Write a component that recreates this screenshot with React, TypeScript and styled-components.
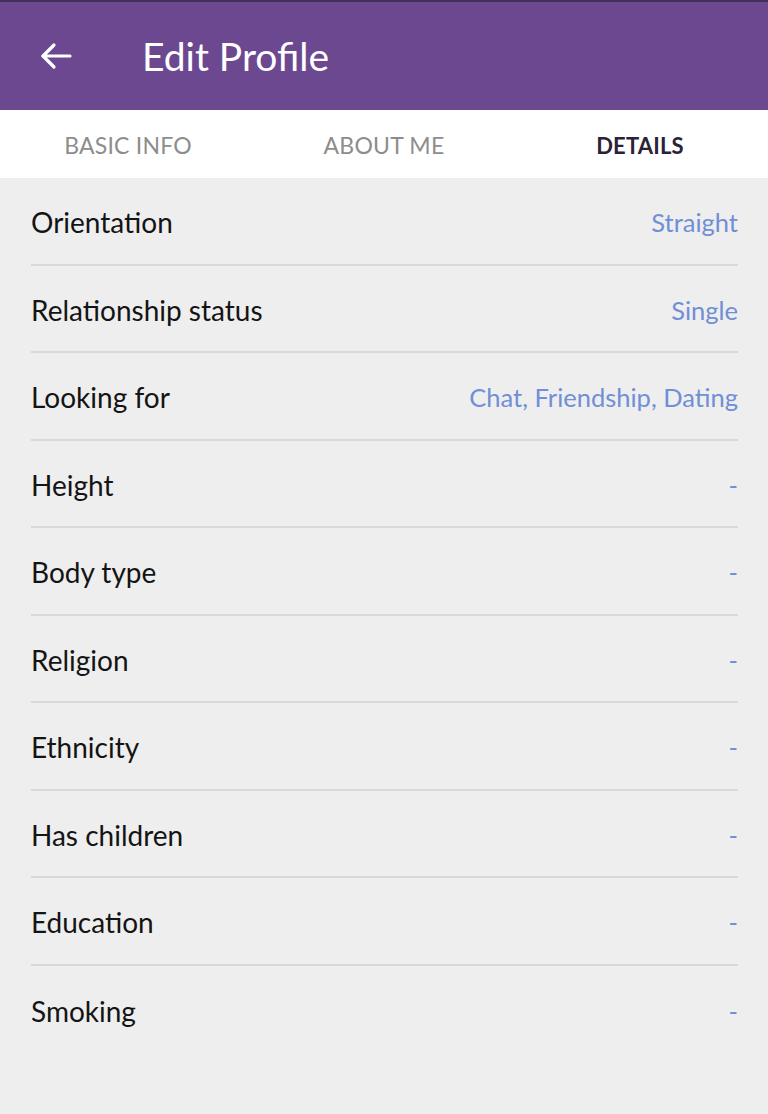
import styled, { createGlobalStyle } from "styled-components";

const GlobalStyle = createGlobalStyle`
  html, body {
    margin: 0;
    padding: 0;
    background: #eeeeee;
    font-family: Lato, "Noto Sans", "Liberation Sans", sans-serif;
  }
`;

const Page = styled.div`
  width: 768px;
  min-height: 1114px;
  background: #eeeeee;
  display: flex;
  flex-direction: column;
`;

const Header = styled.header`
  height: 110px;
  box-sizing: border-box;
  background: #6c4891;
  border-top: 2px solid #43305a;
  display: flex;
  align-items: center;
  padding-left: 38px;
`;

const BackButton = styled.button`
  border: none;
  background: none;
  padding: 0;
  width: 36px;
  height: 36px;
  display: flex;
  align-items: center;
  justify-content: center;
  color: #ffffff;
  cursor: pointer;
`;

const Title = styled.h1`
  margin: 0 0 0 68px;
  font-size: 39px;
  font-weight: 400;
  color: #ffffff;
`;

const Tabs = styled.nav`
  height: 68px;
  background: #ffffff;
  display: grid;
  grid-template-columns: repeat(3, 1fr);
`;

const Tab = styled.div<{ $active?: boolean }>`
  display: flex;
  align-items: center;
  justify-content: center;
  padding-top: 2px;
  font-size: ${(p) => (p.$active ? "22px" : "23px")};
  letter-spacing: 0.2px;
  text-transform: uppercase;
  font-weight: ${(p) => (p.$active ? 700 : 400)};
  color: ${(p) => (p.$active ? "#2b2238" : "#8d8d8d")};
`;

const List = styled.div`
  padding: 0 30px 0 31px;
  display: flex;
  flex-direction: column;
`;

const Row = styled.div`
  height: 87.5px;
  box-sizing: border-box;
  display: flex;
  align-items: center;
  justify-content: space-between;
  padding-top: 3px;
  border-bottom: 2px solid #d8d8d8;

  &:last-child {
    border-bottom: none;
  }
`;

const Label = styled.span`
  font-size: 28px;
  color: #141414;
`;

const Value = styled.span`
  font-size: 25.5px;
  color: #6f8fd6;
`;

const rows: [string, string][] = [
  ["Orientation", "Straight"],
  ["Relationship status", "Single"],
  ["Looking for", "Chat, Friendship, Dating"],
  ["Height", "-"],
  ["Body type", "-"],
  ["Religion", "-"],
  ["Ethnicity", "-"],
  ["Has children", "-"],
  ["Education", "-"],
  ["Smoking", "-"],
];

export default function App() {
  return (
    <Page>
      <GlobalStyle />
      <Header>
        <BackButton aria-label="Back">
          <svg width="34" height="30" viewBox="0 0 34 30" fill="none" stroke="currentColor" strokeWidth="3.2" strokeLinecap="round" strokeLinejoin="round">
            <path d="M31 15H4" />
            <path d="M15 4L4 15L15 26" />
          </svg>
        </BackButton>
        <Title>Edit Profile</Title>
      </Header>
      <Tabs>
        <Tab>Basic info</Tab>
        <Tab>About me</Tab>
        <Tab $active>Details</Tab>
      </Tabs>
      <List>
        {rows.map(([label, value]) => (
          <Row key={label}>
            <Label>{label}</Label>
            <Value>{value}</Value>
          </Row>
        ))}
      </List>
    </Page>
  );
}
